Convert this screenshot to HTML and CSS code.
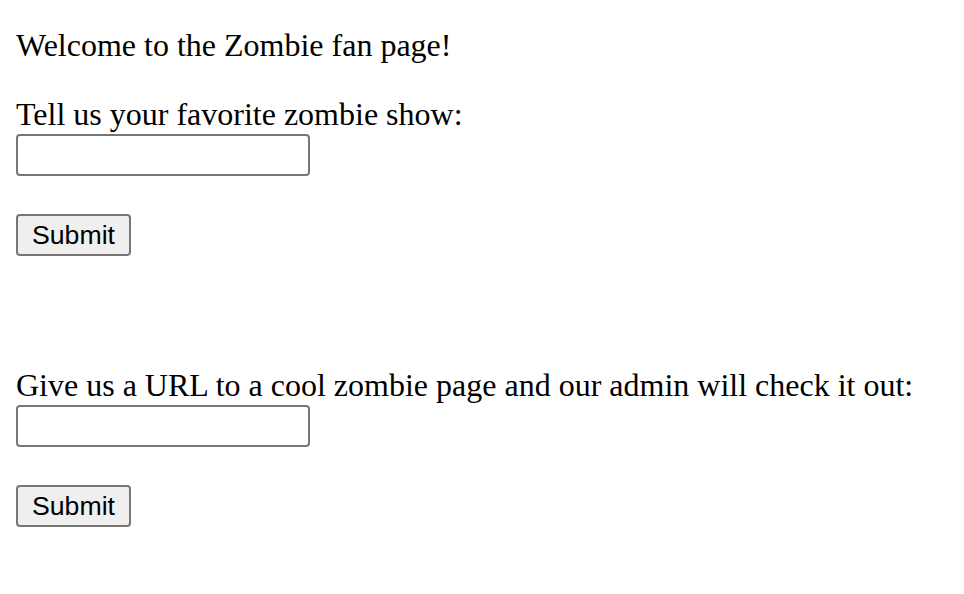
FILE: index.html
```html
<!DOCTYPE html>
<html>
<head>
<meta charset="utf-8">
<link rel="stylesheet" href="styles.css">
</head>
<body>
<div class="page">
  <p class="welcome">Welcome to the Zombie fan page!</p>
  <form class="form">
    <label class="label">Tell us your favorite zombie show:</label>
    <input class="field" type="text">
    <button class="submit" type="button">Submit</button>
  </form>
  <form class="form form-second">
    <label class="label">Give us a URL to a cool zombie page and our admin will check it out:</label>
    <input class="field" type="text">
    <button class="submit" type="button">Submit</button>
  </form>
</div>
</body>
</html>
```
FILE: styles.css
```css
html, body {
  margin: 0;
  padding: 0;
  background: #ffffff;
}
.page {
  padding: 27px 16px 0 16px;
  font-family: "Liberation Serif", "Times New Roman", serif;
  font-size: 32px;
  line-height: 37px;
  color: #000000;
}
.welcome {
  margin: 0;
}
.form {
  display: flex;
  flex-direction: column;
  align-items: flex-start;
  margin-top: 32px;
}
.form-second {
  margin-top: 111px;
}
.label {
  display: block;
  white-space: nowrap;
}
.field {
  box-sizing: border-box;
  width: 294px;
  height: 42px;
  margin: 1px 0 0 0;
  padding: 2px 4px;
  border: 2px solid #767676;
  border-radius: 4px;
  background: #ffffff;
  font-family: "Liberation Sans", Arial, sans-serif;
  font-size: 26.67px;
}
.submit {
  box-sizing: border-box;
  width: 115px;
  height: 42px;
  margin: 38px 0 0 0;
  padding: 0;
  border: 2px solid #767676;
  border-radius: 4px;
  background: #efefef;
  color: #000000;
  font-family: "Liberation Sans", Arial, sans-serif;
  font-size: 26.67px;
  line-height: 38px;
}
```
